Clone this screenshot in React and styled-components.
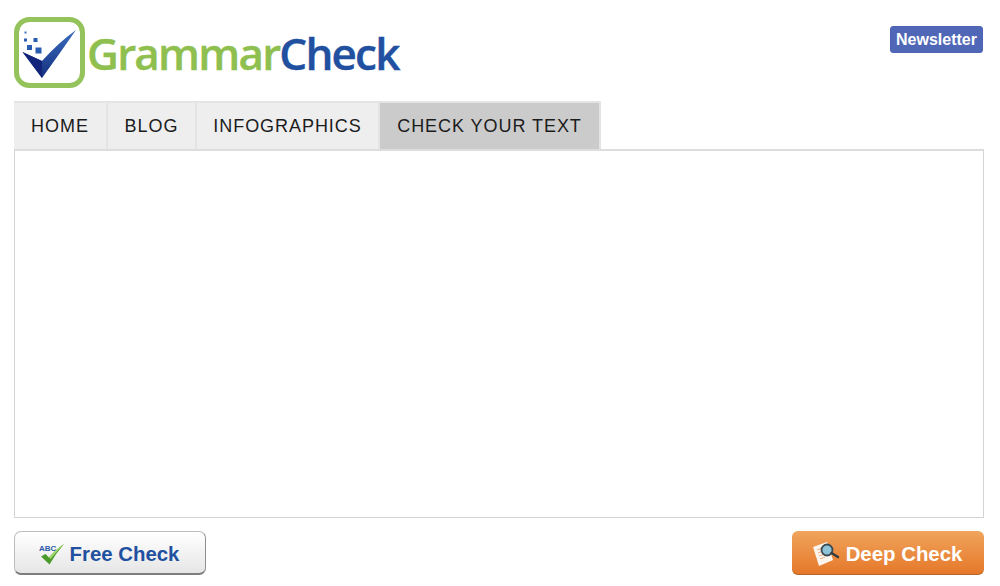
import styled, { createGlobalStyle } from 'styled-components';

const GlobalStyle = createGlobalStyle`
    *{
        margin:0;
        padding:0;
        box-sizing:border-box;
    }
    body{
        background:#fff;
        font-family:"Liberation Sans", Arial, sans-serif;
    }
`;

const Page = styled.main`
    display:flex;
    flex-direction:column;
    width:1000px;
    height:586px;
    padding:17px 16px 0 14px;
    overflow:hidden;
`;

const Header = styled.header`
    display:flex;
    justify-content:space-between;
    align-items:flex-start;
    height:84px;
`;

const Logo = styled.a`
    display:flex;
    align-items:flex-start;
    height:71px;
`;

const LogoText = styled.span`
    margin:6px 0 0 2px;
    font-family:"Open Sans", "Noto Sans", sans-serif;
    font-size:44px;
    line-height:60px;
    font-weight:600;
    letter-spacing:-1.8px;
    color:#8fc04f;
    -webkit-text-stroke:0.4px currentColor;
`;

const LogoBlue = styled.span`
    color:#2150a0;
`;

const Newsletter = styled.button`
    margin:9px 1px 0 0;
    width:93px;
    height:27px;
    border:1px solid #4d63b4;
    border-radius:3px;
    background:#5067b7;
    color:#fff;
    font-family:inherit;
    font-size:16px;
    font-weight:700;
`;

const Tabs = styled.nav`
    display:flex;
    height:48px;
`;

const Tab = styled.a`
    display:flex;
    align-items:center;
    justify-content:center;
    width:${(p) => p.$width}px;
    border-top:2px solid #e4e4e4;
    border-right:2px solid #e4e4e4;
    background:${(p) => (p.$active ? '#cbcbcb' : '#eeeeee')};
    color:#1c1c1c;
    font-size:18px;
    letter-spacing:0.95px;
    white-space:nowrap;
`;

const Editor = styled.div`
    width:970px;
    height:369px;
    border:1px solid #d4d4d4;
    border-top:2px solid #dddddd;
    background:#fff;
`;

const Actions = styled.div`
    display:flex;
    justify-content:space-between;
    margin-top:13px;
`;

const ActionButton = styled.button`
    display:flex;
    align-items:center;
    justify-content:center;
    gap:${(p) => p.$gap}px;
    width:${(p) => p.$width}px;
    height:44px;
    padding:3px 2px 0 0;
    font-family:inherit;
    font-size:20.4px;
    font-weight:700;
`;

const FreeButton = styled(ActionButton)`
    border:1px solid #bdbdbd;
    border-bottom:2px solid #7d7d7d;
    border-right:1px solid #8f8f8f;
    border-radius:7px;
    background:linear-gradient(#ffffff, #e6e6e6);
    color:#2150a0;
`;

const DeepButton = styled(ActionButton)`
    border:0;
    border-bottom:1px solid #b5642a;
    border-radius:6px;
    background:linear-gradient(#f0a45c, #e5782a);
    color:#fff;
`;

const LogoMark = () => (
    <svg width="71" height="71" viewBox="0 0 71 71">
        <defs>
            <linearGradient id="tick" x1="0" y1="0" x2="0" y2="1">
                <stop offset="0" stopColor="#3b6cc0" />
                <stop offset="1" stopColor="#14307f" />
            </linearGradient>
        </defs>
        <rect x="2.500" y="2.500" width="66" height="66" rx="13" fill="#fff" stroke="#93c35a" strokeWidth="5" />
        <path d="M8.500 35 L28 44 Q44 26 62 13 Q46 36 28 61 Z" fill="url(#tick)" />
        <path d="M8.500 35 L28 44 L28 61 Z" fill="#12257a" />
        <rect x="10.500" y="14.500" width="2" height="2" fill="#3f74c4" />
        <rect x="10" y="21.500" width="3" height="3" fill="#2a5cb0" />
        <rect x="19.500" y="21" width="4" height="4" fill="#2a5cb0" />
        <rect x="13" y="28" width="5" height="5" fill="#2a5cb0" />
        <rect x="21.500" y="30.500" width="6" height="6" fill="#2a5cb0" />
    </svg>
);

const AbcCheck = () => (
    <svg width="25" height="21" viewBox="0 0 25 21">
        <text x="0" y="7" fontFamily="Liberation Sans, sans-serif" fontSize="8" fontWeight="700" fill="#2c5aa8">ABC</text>
        <path d="M2 12.500 L6.500 10 L10 13.500 Q16 6 25 0 Q17 9 10.500 20.500 Z" fill="#4a9a2c" />
        <path d="M10 13.500 Q16 6 25 0 Q18 7 11.500 15 Z" fill="#a5d86e" />
    </svg>
);

const DocSearch = () => (
    <svg width="28" height="26" viewBox="0 0 28 26">
        <path d="M1 6 L15 1 L21 19 L7 25 Z" fill="#fdf6ee" />
        <path d="M5 9 L10 7 M6 12 L10 10.500 M7 15 L11 13.500 M8 18 L13 16" stroke="#f0b184" strokeWidth="1" />
        <circle cx="15" cy="9" r="5.500" fill="#8fc4d8" stroke="#3d4a52" strokeWidth="1.800" />
        <path d="M19.500 12 L26 16" stroke="#333b40" strokeWidth="2.400" strokeLinecap="round" />
    </svg>
);

export default function App() {
    return (
        <>
            <GlobalStyle />
            <Page>
                <Header>
                    <Logo>
                        <LogoMark />
                        <LogoText>Grammar<LogoBlue>Check</LogoBlue></LogoText>
                    </Logo>
                    <Newsletter>Newsletter</Newsletter>
                </Header>
                <Tabs>
                    <Tab $width={94}>HOME</Tab>
                    <Tab $width={89}>BLOG</Tab>
                    <Tab $width={183}>INFOGRAPHICS</Tab>
                    <Tab $width={221} $active>CHECK YOUR TEXT</Tab>
                </Tabs>
                <Editor />
                <Actions>
                    <FreeButton $width={192} $gap={6}><AbcCheck />Free Check</FreeButton>
                    <DeepButton $width={192} $gap={6}><DocSearch />Deep Check</DeepButton>
                </Actions>
            </Page>
        </>
    );
}
